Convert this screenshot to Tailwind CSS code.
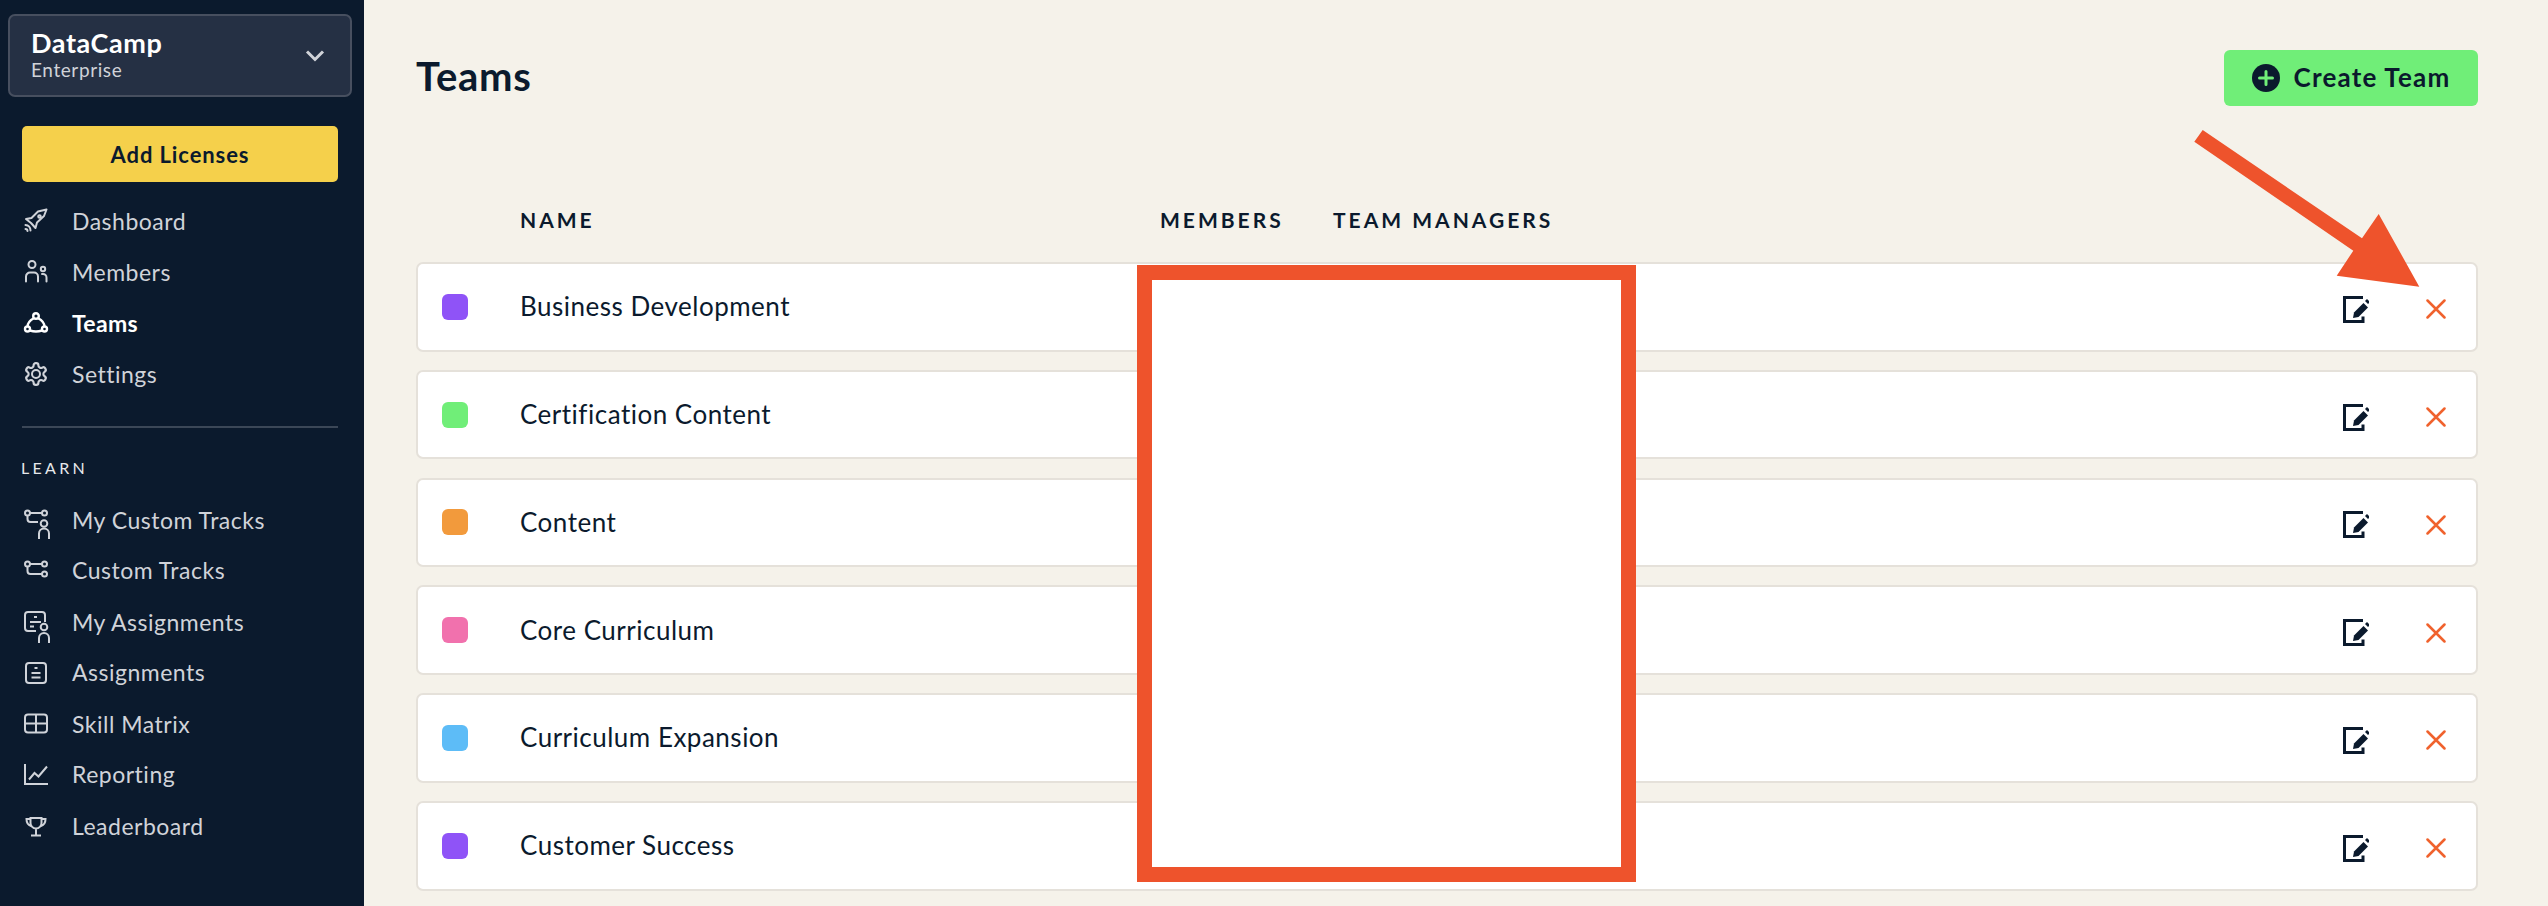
<!DOCTYPE html>
<html lang="en">
<head>
    <meta charset="UTF-8">
    <meta name="viewport" content="width=device-width, initial-scale=1.0">
    <title>Teams</title>
    <script src="https://cdn.jsdelivr.net/npm/@tailwindcss/browser@4"></script>
</head>
<body class="relative flex h-[906px] overflow-hidden bg-[#f5f2ea] font-[Lato,sans-serif] text-[#0b1a2d]">
    <!-- sidebar -->
    <aside class="w-[364px] shrink-0 bg-[#0b1a2d] pt-[14px] text-[23px] text-[#d0d3d9]">
        <div class="ml-[8px] mr-[12px] flex h-[83px] items-center justify-between rounded-[7px] border-2 border-[#474f5f] bg-[#253044] pl-[21px] pr-[25px]">
            <div class="-translate-y-[1px]">
                <div class="text-[27px] leading-[30px] font-bold tracking-[0.6px] text-white">DataCamp</div>
                <div class="text-[19px] leading-[24px] tracking-[0.6px] text-[#d0d3d9]">Enterprise</div>
            </div>
            <svg class="h-[14px] w-[20px]" viewBox="0 0 20 14" fill="none" stroke="#d0d3d9" stroke-width="3"><path d="M2 2.500l8 8 8-8"/></svg>
        </div>
        <div class="ml-[22px] mr-[26px] mt-[29px] flex h-[56px] items-center justify-center rounded-[5px] bg-[#f5d04b] text-[22px] font-bold tracking-[0.9px] text-[#0b1a2d]">Add Licenses</div>

        <nav class="mt-[14px]">
            <a class="flex h-[51px] items-center px-[24px]">
                <svg class="h-[24px] w-[24px] shrink-0 overflow-visible" viewBox="0 0 24 24" fill="none" stroke="currentColor" stroke-width="2" stroke-linejoin="round" stroke-linecap="round"><path d="M22.500-.500 14 1.500 7.500 8 2 9l5 4 4.500 5 1.500-5.500 7-6.500z"/><circle cx="15.500" cy="6.500" r="1.300"/><path d="M1.500 15c3 .2 5 2.500 5 5.500M1.500 19c1.200 0 2 .7 2 2"/></svg>
                <span class="ml-[24px] tracking-[0.5px]">Dashboard</span>
            </a>
            <a class="flex h-[51px] items-center px-[24px]">
                <svg class="h-[24px] w-[24px] shrink-0 overflow-visible" viewBox="0 0 24 24" fill="none" stroke="currentColor" stroke-width="2" stroke-linecap="round"><circle cx="8" cy="3.500" r="3.500"/><path d="M2 20.500v-5a4 4 0 0 1 4-4h4a4 4 0 0 1 4 4v5"/><circle cx="19" cy="8" r="2.200"/><path d="M18 13h1a3.500 3.500 0 0 1 3.500 3.500v4"/></svg>
                <span class="ml-[24px] tracking-[0.5px]">Members</span>
            </a>
            <a class="flex h-[51px] items-center px-[24px] font-bold text-white">
                <svg class="h-[24px] w-[24px] shrink-0 overflow-visible" viewBox="0 0 24 24" fill="none" stroke="currentColor" stroke-width="2.400"><circle cx="12" cy="4" r="2.800"/><circle cx="3.500" cy="17" r="2.500"/><circle cx="20.500" cy="17" r="2.500"/><path d="M9.800 6.200C6.200 8 3.800 10.500 3.500 14.500M14.200 6.200C17.800 8 20.200 10.500 20.500 14.500M6 18.500c4 1.300 8 1.300 12 0"/></svg>
                <span class="ml-[24px] tracking-[0.3px]">Teams</span>
            </a>
            <a class="flex h-[51px] items-center px-[24px]">
                <svg class="h-[24px] w-[24px] shrink-0 -translate-y-[1px] overflow-visible" viewBox="0 0 24 24" fill="none" stroke="currentColor" stroke-width="2"><path transform="translate(12 12) scale(1.080) translate(-12 -12)" d="M12.220 2h-.440a2 2 0 0 0-2 2v.180a2 2 0 0 1-1 1.730l-.430.250a2 2 0 0 1-2 0l-.150-.080a2 2 0 0 0-2.730.730l-.220.380a2 2 0 0 0 .730 2.730l.150.100a2 2 0 0 1 1 1.720v.510a2 2 0 0 1-1 1.740l-.150.090a2 2 0 0 0-.730 2.730l.220.380a2 2 0 0 0 2.730.730l.150-.080a2 2 0 0 1 2 0l.430.250a2 2 0 0 1 1 1.730V20a2 2 0 0 0 2 2h.440a2 2 0 0 0 2-2v-.180a2 2 0 0 1 1-1.730l.430-.250a2 2 0 0 1 2 0l.150.080a2 2 0 0 0 2.730-.730l.220-.390a2 2 0 0 0-.730-2.730l-.150-.080a2 2 0 0 1-1-1.740v-.500a2 2 0 0 1 1-1.740l.150-.090a2 2 0 0 0 .730-2.730l-.220-.380a2 2 0 0 0-2.730-.730l-.150.080a2 2 0 0 1-2 0l-.430-.250a2 2 0 0 1-1-1.730V4a2 2 0 0 0-2-2z"/><circle cx="12" cy="12" r="4"/></svg>
                <span class="ml-[24px] tracking-[0.5px]">Settings</span>
            </a>
        </nav>

        <div class="ml-[22px] mr-[26px] mt-[26px] h-[2px] bg-[#3b4757]"></div>
        <div class="mx-[21px] mt-[30px] text-[16px] leading-[20px] tracking-[3.300px] text-[#e6e8eb]">LEARN</div>

        <nav class="mt-[17px]">
            <a class="flex h-[51px] items-center px-[24px]">
                <svg class="h-[24px] w-[24px] shrink-0 overflow-visible" viewBox="0 0 24 24" fill="none" stroke="currentColor" stroke-width="2"><circle cx="3.500" cy="4" r="2.500"/><circle cx="20.500" cy="4" r="2.500"/><path d="M6 4h12M3.500 6.500V10a3 3 0 0 0 3 3H14"/><circle cx="20" cy="14.500" r="3.300"/><path d="M15 30v-5.500a5 5 0 0 1 10 0V30"/></svg>
                <span class="ml-[24px] tracking-[0.5px]">My Custom Tracks</span>
            </a>
            <a class="flex h-[51px] items-center px-[24px]">
                <svg class="h-[24px] w-[24px] shrink-0 -translate-y-[1px] overflow-visible" viewBox="0 0 24 24" fill="none" stroke="currentColor" stroke-width="2"><circle cx="3.500" cy="5" r="2.500"/><circle cx="20.500" cy="5" r="2.500"/><circle cx="20.500" cy="15" r="2.500"/><path d="M6 5h12M3.500 7.500V12a3 3 0 0 0 3 3H18"/></svg>
                <span class="ml-[24px] -translate-y-[1px] tracking-[0.5px]">Custom Tracks</span>
            </a>
            <a class="flex h-[51px] items-center px-[24px]">
                <svg class="h-[24px] w-[24px] shrink-0 overflow-visible" viewBox="0 0 24 24" fill="none" stroke="currentColor" stroke-width="2"><path d="M12 20H4a3 3 0 0 1-3-3V4a3 3 0 0 1 3-3h14a3 3 0 0 1 3 3v7"/><path d="M10 6h3M6 11h11M6 15.500h4"/><circle cx="20" cy="16" r="3.300"/><path d="M15 32v-5a5 5 0 0 1 10 0v5"/></svg>
                <span class="ml-[24px] tracking-[0.5px]">My Assignments</span>
            </a>
            <a class="flex h-[51px] items-center px-[24px]">
                <svg class="h-[24px] w-[24px] shrink-0 overflow-visible" viewBox="0 0 24 24" fill="none" stroke="currentColor" stroke-width="2"><rect x="2" y="1" width="20" height="20" rx="3"/><path d="M10.500 6h3M7.500 11h9M7.500 15.500h9"/></svg>
                <span class="ml-[24px] -translate-y-[1px] tracking-[0.5px]">Assignments</span>
            </a>
            <a class="flex h-[51px] items-center px-[24px]">
                <svg class="h-[24px] w-[24px] shrink-0 overflow-visible" viewBox="0 0 24 24" fill="none" stroke="currentColor" stroke-width="2"><rect x="1" y="1.500" width="22" height="18" rx="3"/><path d="M1 10.500h22M12 1.500v18"/></svg>
                <span class="ml-[24px] tracking-[0.5px]">Skill Matrix</span>
            </a>
            <a class="flex h-[51px] items-center px-[24px]">
                <svg class="h-[24px] w-[24px] shrink-0 overflow-visible" viewBox="0 0 24 24" fill="none" stroke="currentColor" stroke-width="2"><path d="M1 0v20h23M5 15.500l5.500-6.500 4 3.500L23 2.500"/></svg>
                <span class="ml-[24px] -translate-y-[1px] tracking-[0.5px]">Reporting</span>
            </a>
            <a class="flex h-[51px] items-center px-[24px]">
                <svg class="h-[24px] w-[24px] shrink-0 overflow-visible" viewBox="0 0 24 24" fill="none" stroke="currentColor" stroke-width="2"><path d="M6.500 3h11v5a5.500 5.500 0 0 1-11 0zM6.500 4H2.500c0 4 1.500 6 4.500 7M17.500 4h4c0 4-1.500 6-4.500 7M12 13.500V20M7 20.500h10"/></svg>
                <span class="ml-[24px] tracking-[0.5px]">Leaderboard</span>
            </a>
        </nav>
    </aside>

    <!-- main -->
    <main class="flex-1 pl-[52px] pr-[70px] pt-[50px]">
        <div class="flex h-[56px] items-center justify-between">
            <h1 class="-translate-y-[2px] text-[40px] font-bold tracking-[0.7px]">Teams</h1>
            <button class="flex h-[56px] w-[254px] items-center justify-center gap-[14px] rounded-[6px] bg-[#70ee78] text-[26px] font-bold tracking-[1.200px]">
                <svg class="h-[28px] w-[28px]" viewBox="0 0 28 28"><circle cx="14" cy="14" r="14" fill="#0b1a2d"/><path d="M14 7.500v13M7.500 14h13" stroke="#70ee78" stroke-width="3" stroke-linecap="round"/></svg>
                <span class="-translate-y-[1px]">Create Team</span>
            </button>
        </div>

        <div class="mt-[101px] flex h-[26px] items-center text-[21px] font-bold tracking-[3px]">
            <span class="ml-[104px] w-[640px]">NAME</span>
            <span class="w-[173px]">MEMBERS</span>
            <span>TEAM MANAGERS</span>
        </div>

        <div id="teamList" class="mt-[29px] flex flex-col gap-[18.200px]"></div>
    </main>

    <!-- annotations drawn on top of the screenshot -->
    <div class="absolute left-[1137px] top-[265px] h-[617px] w-[499px] border-[15px] border-[#ee532c] bg-white"></div>
    <svg class="absolute left-0 top-0 h-[906px] w-[2548px]" viewBox="0 0 2548 906">
        <polygon fill="#ee532c" points="2202.700,130 2194.300,141.700 2353.300,250.700 2336.700,275.700 2419.300,286.700 2378.700,214 2362,238.300"/>
    </svg>

    <script>
        const teams = [
            { name: "Business Development", color: "bg-[#8f53f7]" },
            { name: "Certification Content", color: "bg-[#70ee78]" },
            { name: "Content", color: "bg-[#f29a3c]" },
            { name: "Core Curriculum", color: "bg-[#f171ad]" },
            { name: "Curriculum Expansion", color: "bg-[#5dbcf7]" },
            { name: "Customer Success", color: "bg-[#8f53f7]" }
        ];

        const teamList = document.getElementById("teamList");
        teams.forEach(team => {
            const row = document.createElement("div");
            row.className = "flex h-[89.600px] items-center rounded-[7px] border-2 border-[#e5e1da] bg-white pl-[24px] pr-[30px]";
            row.innerHTML = `
                <span class="h-[26px] w-[26px] rounded-[6px] ${team.color}"></span>
                <span class="ml-[52px] text-[26px] tracking-[0.5px]">${team.name}</span>
                <div class="ml-auto mt-[5px] flex items-center gap-[57px]">
                    <svg class="h-[27px] w-[26px]" viewBox="0 0 26 27" fill="none"><path d="M20 1.500H1.500v24H20v-5" stroke="#0b1a2d" stroke-width="3"/><path d="M10 22l1-5.500 9.500-9.500 4.500 4.500-9.500 9.500z" fill="#0b1a2d"/><path d="M22 5l2-2 3 3-2 2z" fill="#0b1a2d"/></svg>
                    <svg class="h-[20px] w-[20px]" viewBox="0 0 20 20" fill="none" stroke="#f0622d" stroke-width="2.500" stroke-linecap="round"><path d="M1.500 1.500l17 17M18.500 1.500l-17 17"/></svg>
                </div>`;
            teamList.appendChild(row);
        });
    </script>
</body>
</html>
